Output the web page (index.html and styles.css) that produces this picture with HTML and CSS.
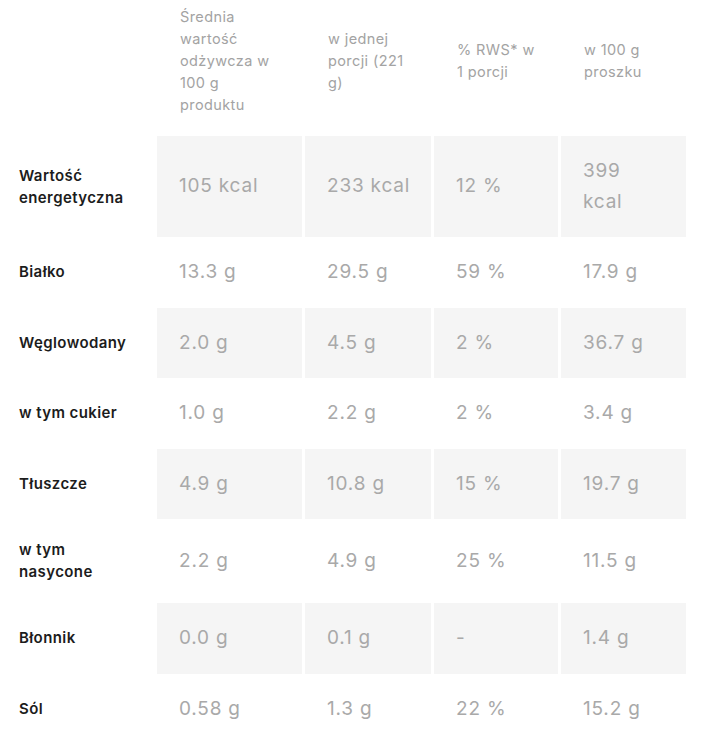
FILE: index.html
```html
<!DOCTYPE html>
<html lang="pl">
<head>
<meta charset="utf-8">
<title>Wartości odżywcze</title>
<link rel="stylesheet" href="styles.css">
</head>
<body>
<div class="nutri">
  <div class="row head">
    <div class="cell label"></div>
    <div class="cell">Średnia<br>wartość<br>odżywcza w<br>100 g<br>produktu</div>
    <div class="cell">w jednej<br>porcji (221<br>g)</div>
    <div class="cell">% RWS* w<br>1 porcji</div>
    <div class="cell">w 100 g<br>proszku</div>
  </div>
  <div class="row shaded">
    <div class="cell label">Wartość<br>energetyczna</div>
    <div class="cell">105 kcal</div>
    <div class="cell">233 kcal</div>
    <div class="cell">12 %</div>
    <div class="cell">399<br>kcal</div>
  </div>
  <div class="row">
    <div class="cell label">Białko</div>
    <div class="cell">13.3 g</div>
    <div class="cell">29.5 g</div>
    <div class="cell">59 %</div>
    <div class="cell">17.9 g</div>
  </div>
  <div class="row shaded">
    <div class="cell label">Węglowodany</div>
    <div class="cell">2.0 g</div>
    <div class="cell">4.5 g</div>
    <div class="cell">2 %</div>
    <div class="cell">36.7 g</div>
  </div>
  <div class="row">
    <div class="cell label">w tym cukier</div>
    <div class="cell">1.0 g</div>
    <div class="cell">2.2 g</div>
    <div class="cell">2 %</div>
    <div class="cell">3.4 g</div>
  </div>
  <div class="row shaded">
    <div class="cell label">Tłuszcze</div>
    <div class="cell">4.9 g</div>
    <div class="cell">10.8 g</div>
    <div class="cell">15 %</div>
    <div class="cell">19.7 g</div>
  </div>
  <div class="row">
    <div class="cell label">w tym<br>nasycone</div>
    <div class="cell">2.2 g</div>
    <div class="cell">4.9 g</div>
    <div class="cell">25 %</div>
    <div class="cell">11.5 g</div>
  </div>
  <div class="row shaded">
    <div class="cell label">Błonnik</div>
    <div class="cell">0.0 g</div>
    <div class="cell">0.1 g</div>
    <div class="cell">-</div>
    <div class="cell">1.4 g</div>
  </div>
  <div class="row">
    <div class="cell label">Sól</div>
    <div class="cell">0.58 g</div>
    <div class="cell">1.3 g</div>
    <div class="cell">22 %</div>
    <div class="cell">15.2 g</div>
  </div>
</div>
</body>
</html>
```
FILE: styles.css
```css
html, body {
  margin: 0;
  padding: 0;
  background: #ffffff;
}

body {
  font-family: Inter, "Liberation Sans", sans-serif;
}

.nutri {
  width: 686px;
}

.row {
  display: grid;
  grid-template-columns: 154px 145px 126px 124px 125px;
  column-gap: 3px;
  align-items: stretch;
}

.cell {
  display: flex;
  align-items: center;
  padding: 20px 20px 20px 22px;
  font-size: 19px;
  line-height: 30.5px;
  letter-spacing: 0.8px;
  color: #a9a9a9;
  white-space: nowrap;
}

.cell.label {
  padding-left: 19px;
  padding-right: 0;
  font-size: 15px;
  font-weight: 600;
  line-height: 22px;
  letter-spacing: 0.4px;
  color: #1c1c1c;
}

.row.shaded .cell:not(.label) {
  background: #f5f5f5;
}

.row.head .cell {
  padding-top: 6px;
  padding-bottom: 20px;
  padding-left: 23px;
  font-size: 14.5px;
  line-height: 22px;
  letter-spacing: 0.4px;
  color: #a3a3a3;
}
```
